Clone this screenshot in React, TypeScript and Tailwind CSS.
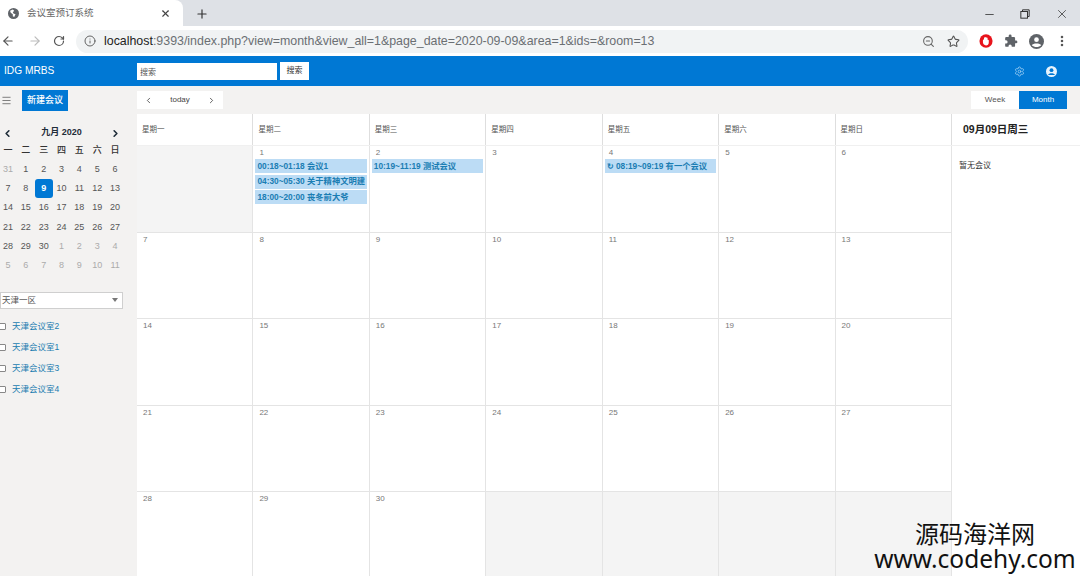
import * as React from 'react';
import { ArrowLeft, ArrowRight, ChevronLeft, ChevronRight, Info, Menu, Minus, Plus, RotateCw, Settings, Star, X, ZoomOut, EllipsisVertical } from 'lucide-react';

const FONT = "font-['Liberation_Sans','Noto_Sans_CJK_SC',sans-serif]";

const weekdays = ['星期一', '星期二', '星期三', '星期四', '星期五', '星期六', '星期日'];
const miniHead = ['一', '二', '三', '四', '五', '六', '日'];
const miniDays: { d: number; muted?: boolean; active?: boolean }[] = [
  { d: 31, muted: true }, { d: 1 }, { d: 2 }, { d: 3 }, { d: 4 }, { d: 5 }, { d: 6 },
  { d: 7 }, { d: 8 }, { d: 9, active: true }, { d: 10 }, { d: 11 }, { d: 12 }, { d: 13 },
  { d: 14 }, { d: 15 }, { d: 16 }, { d: 17 }, { d: 18 }, { d: 19 }, { d: 20 },
  { d: 21 }, { d: 22 }, { d: 23 }, { d: 24 }, { d: 25 }, { d: 26 }, { d: 27 },
  { d: 28 }, { d: 29 }, { d: 30 }, { d: 1, muted: true }, { d: 2, muted: true }, { d: 3, muted: true }, { d: 4, muted: true },
  { d: 5, muted: true }, { d: 6, muted: true }, { d: 7, muted: true }, { d: 8, muted: true }, { d: 9, muted: true }, { d: 10, muted: true }, { d: 11, muted: true },
];
const rooms = ['天津会议室2', '天津会议室1', '天津会议室3', '天津会议室4'];

const events: Record<number, string[]> = {
  1: ['00:18~01:18 会议1', '04:30~05:30 关于精神文明建', '18:00~20:00 丧冬前大爷'],
  2: ['10:19~11:19 测试会议'],
  4: ['↻ 08:19~09:19 有一个会议'],
};

// null = cell outside this month
const weeks: (number | null)[][] = [
  [null, 1, 2, 3, 4, 5, 6],
  [7, 8, 9, 10, 11, 12, 13],
  [14, 15, 16, 17, 18, 19, 20],
  [21, 22, 23, 24, 25, 26, 27],
  [28, 29, 30, null, null, null, null],
];

function BrowserChrome() {
  return (
    <div>
      <div className="flex h-[26px] items-end bg-[#dee1e6]">
        <div className="flex h-[26px] w-[183px] items-center rounded-tr-lg bg-white pl-2 pr-3">
          <svg viewBox="0 0 16 16" className="h-[11px] w-[11px] shrink-0">
            <circle cx="8" cy="8" r="8" fill="#5f6368" />
            <path d="M3 4l4-2 2 2-2 2 1 2 3 1-2 4-2-1V9L4 7z" fill="#fff" />
          </svg>
          <span className="ml-2 flex-1 text-[9.500px] text-[#666]">会议室预订系统</span>
          <X className="h-[11px] w-[11px] text-[#444]" strokeWidth={2.5} />
        </div>
        <Plus className="mb-[5px] ml-[12px] h-[14px] w-[14px] text-[#333]" strokeWidth={2} />
        <div className="flex-1" />
        <div className="mb-[5px] flex items-center text-[#333]">
          <Minus className="h-[13px] w-[13px]" strokeWidth={1.5} />
          <svg viewBox="0 0 12 12" className="ml-[24px] h-[10px] w-[10px]" fill="none" stroke="currentColor" strokeWidth="1.2">
            <rect x="1" y="3" width="8" height="8" />
            <path d="M3 3V1h8v8H9" />
          </svg>
          <X className="ml-[25px] mr-[11px] h-[14px] w-[14px]" strokeWidth={1.3} />
        </div>
      </div>
      <div className="flex h-[30px] items-center bg-white">
        <ArrowLeft className="ml-[1px] h-[14px] w-[14px] text-[#555]" strokeWidth={2} />
        <ArrowRight className="ml-[13px] h-[14px] w-[14px] text-[#bbb]" strokeWidth={2} />
        <RotateCw className="ml-[11px] h-[12px] w-[12px] text-[#555]" strokeWidth={2.4} />
        <div className="ml-[11px] flex h-[23px] w-[892px] items-center rounded-full bg-[#f1f3f4] pl-[8px] pr-[8px]">
          <Info className="h-[12px] w-[12px] text-[#555]" strokeWidth={1.8} />
          <span className="ml-[8px] flex-1 text-[12.400px] text-[#6b6f73]">
            <span className="text-[#222]">localhost</span>:9393/index.php?view=month&amp;view_all=1&amp;page_date=2020-09-09&amp;area=1&amp;ids=&amp;room=13
          </span>
          <ZoomOut className="h-[13px] w-[13px] text-[#666]" strokeWidth={2} />
          <Star className="ml-[12px] h-[13px] w-[13px] text-[#555]" strokeWidth={2} />
        </div>
        <svg viewBox="0 0 16 16" className="ml-[11px] h-[14px] w-[14px]">
          <ellipse cx="8" cy="8" rx="7.500" ry="7.800" fill="#e8141c" />
          <path d="M4.500 7c0-1 1-1 1.200-.4V4.500c0-1 1.100-1 1.200-.2 0-1 1.400-1 1.500 0 .3-.7 1.400-.5 1.400.4v2c.5-.5 1.400-.2 1.400.6v2C11.200 11.800 9.800 13 8 13s-3.500-1.500-3.500-3.500z" fill="#fff" />
        </svg>
        <svg viewBox="0 0 24 24" className="ml-[11px] h-[14px] w-[14px]" fill="#5f6368">
          <path d="M20.5 11H19V7a2 2 0 0 0-2-2h-4V3.500a2.500 2.500 0 0 0-5 0V5H4a2 2 0 0 0-2 2v3.800h1.500a2.700 2.700 0 0 1 0 5.400H2V20a2 2 0 0 0 2 2h3.800v-1.500a2.700 2.700 0 0 1 5.400 0V22H17a2 2 0 0 0 2-2v-4h1.500a2.500 2.500 0 0 0 0-5z" />
        </svg>
        <svg viewBox="0 0 16 16" className="ml-[11px] h-[15px] w-[15px]">
          <circle cx="8" cy="8" r="8" fill="#5f6368" />
          <circle cx="8" cy="6" r="2.500" fill="#fff" />
          <path d="M3 12c1-2.500 9-2.500 10 0-2.500 2.500-7.500 2.500-10 0z" fill="#fff" />
        </svg>
        <EllipsisVertical className="ml-[11px] h-[14px] w-[14px] text-[#555]" strokeWidth={2.4} />
      </div>
    </div>
  );
}

function TopBar() {
  return (
    <div className="flex h-[30px] items-center bg-[#0078d4] text-white">
      <div className="w-[137px] pl-[4px] text-[10.200px] font-medium">IDG MRBS</div>
      <input readOnly value="搜索" className="h-[17px] w-[140px] bg-white px-[3px] text-[8px] text-[#555] outline-none" />
      <button className="ml-[3px] h-[18px] w-[29px] bg-white text-[8px] text-[#333]">搜索</button>
      <div className="flex-1" />
      <Settings className="h-[11px] w-[11px] text-[#a8d4f5]" strokeWidth={1.6} />
      <svg viewBox="0 0 16 16" className="ml-[21px] mr-[23px] h-[11px] w-[11px]">
        <circle cx="8" cy="8" r="8" fill="#e8f3fc" />
        <circle cx="8" cy="6" r="2.800" fill="#0078d4" />
        <path d="M3 13c1-3.500 9-3.500 10 0z" fill="#0078d4" />
      </svg>
    </div>
  );
}

function Sidebar() {
  return (
    <div className="w-[137px] shrink-0 bg-[#f3f2f1]">
      <div className="flex h-[28px] items-center">
        <Menu className="ml-[1px] h-[11px] w-[11px] text-[#555]" strokeWidth={1.6} />
        <button className="ml-[10px] mt-[1px] h-[21px] w-[46px] bg-[#0078d4] text-[9px] font-medium text-white">新建会议</button>
      </div>
      <div className="ml-[-1px] w-[125px]">
        <div className="mt-[9px] flex h-[20px] items-center justify-between px-[3px] text-[#1f2d3a]">
          <ChevronLeft className="h-[11px] w-[11px]" strokeWidth={3.5} />
          <span className="text-[9px] font-bold">九月 2020</span>
          <ChevronRight className="h-[11px] w-[11px]" strokeWidth={3.5} />
        </div>
        <div className="mt-[-2px] grid grid-cols-7">
          {miniHead.map(h => (
            <div key={h} className="flex h-[19px] items-center justify-center text-[9px] font-medium text-[#333]">{h}</div>
          ))}
          {miniDays.map((day, i) => (
            <div key={i} className="flex h-[19.300px] items-center justify-center text-[9px]">
              {day.active ? (
                <span className="flex h-[19px] w-[18px] items-center justify-center rounded-[3px] bg-[#0078d4] font-bold text-white">{day.d}</span>
              ) : (
                <span className={day.muted ? 'text-[#ababab]' : 'text-[#555]'}>{day.d}</span>
              )}
            </div>
          ))}
        </div>
        <div className="ml-[1px] mt-[16px] flex h-[17px] w-[123px] items-center justify-between border border-[#cfcfcf] bg-white pl-[1px] pr-[4px] text-[8.500px] text-[#555]">
          <span>天津一区</span>
          <span className="h-0 w-0 border-x-[3px] border-t-[4px] border-x-transparent border-t-[#777]" />
        </div>
        <div className="ml-[1px] mt-[7px]">
          {rooms.map(room => (
            <div key={room} className="flex h-[21px] items-center">
              <span className="ml-[-1px] h-[7px] w-[7px] rounded-[1px] border border-[#888] bg-white" />
              <span className="ml-[6px] text-[8.500px] text-[#1a7cb0]">{room}</span>
            </div>
          ))}
        </div>
      </div>
    </div>
  );
}

function Calendar() {
  return (
    <div className="flex min-w-0 flex-1 flex-col">
      <div className="flex h-[28px] items-center bg-[#f3f2f1]">
        <div className="flex h-[18px] w-[86px] items-center justify-between bg-white px-[7px] text-[#333]">
          <ChevronLeft className="h-[9px] w-[9px]" strokeWidth={2} />
          <span className="text-[8px] text-[#444]">today</span>
          <ChevronRight className="h-[9px] w-[9px]" strokeWidth={2} />
        </div>
        <div className="flex-1" />
        <button className="h-[18px] w-[48px] bg-white text-[8px] text-[#555]">Week</button>
        <button className="mr-[13px] h-[18px] w-[48px] bg-[#0078d4] text-[8px] text-white">Month</button>
      </div>
      <div className="flex min-h-0 flex-1 overflow-hidden">
        <div className="flex w-[815px] shrink-0 flex-col bg-white">
          <div className="grid h-[32px] shrink-0 grid-cols-7 border-b border-[#f0f0f0]">
            {weekdays.map(w => (
              <div key={w} className="flex items-center border-r border-[#dedede] pl-[5px] text-[7.500px] text-[#555]">{w}</div>
            ))}
          </div>
          <div className="grid shrink-0 auto-rows-[86.500px] grid-cols-7">
            {weeks.flat().map((d, i) =>
              d === null ? (
                <div key={i} className="border-b border-r border-[#e4e4e4] bg-[#f4f4f4]" />
              ) : (
                <div key={i} className="border-b border-r border-[#e4e4e4] px-[2px]">
                  <div className="h-[13px] pl-[4px] pt-[2px] text-[8px] leading-[10px] text-[#777]">{d}</div>
                  {(events[d] || []).map(ev => (
                    <div key={ev} className="mb-[1.500px] flex h-[14px] items-center overflow-hidden whitespace-nowrap bg-[#bcdcf5] pl-[2px] text-[8.300px] font-semibold text-[#1a7db3]">{ev}</div>
                  ))}
                </div>
              ),
            )}
          </div>
        </div>
        <div className="flex-1 bg-white">
          <div className="flex h-[32px] items-center border-b border-[#f0f0f0] pl-[11px] text-[10.500px] font-bold text-[#222]">09月09日周三</div>
          <div className="mt-[14px] pl-[7px] text-[8px] text-[#333]">暂无会议</div>
        </div>
      </div>
    </div>
  );
}

export default function App() {
  return (
    <div className={`relative flex h-[576px] w-[1080px] flex-col overflow-hidden bg-white ${FONT}`}>
      <BrowserChrome />
      <TopBar />
      <div className="flex min-h-0 flex-1">
        <Sidebar />
        <Calendar />
      </div>
      {/* site watermark sits over the page */}
      <div className="absolute left-[873px] top-[521px] w-[204px] text-center font-['Noto_Sans','Noto_Sans_CJK_SC',sans-serif] text-[#111]">
        <div className="text-[24px] leading-[26px]">源码海洋网</div>
        <div className="text-[24.500px] leading-[24px]">www.codehy.com</div>
      </div>
    </div>
  );
}
